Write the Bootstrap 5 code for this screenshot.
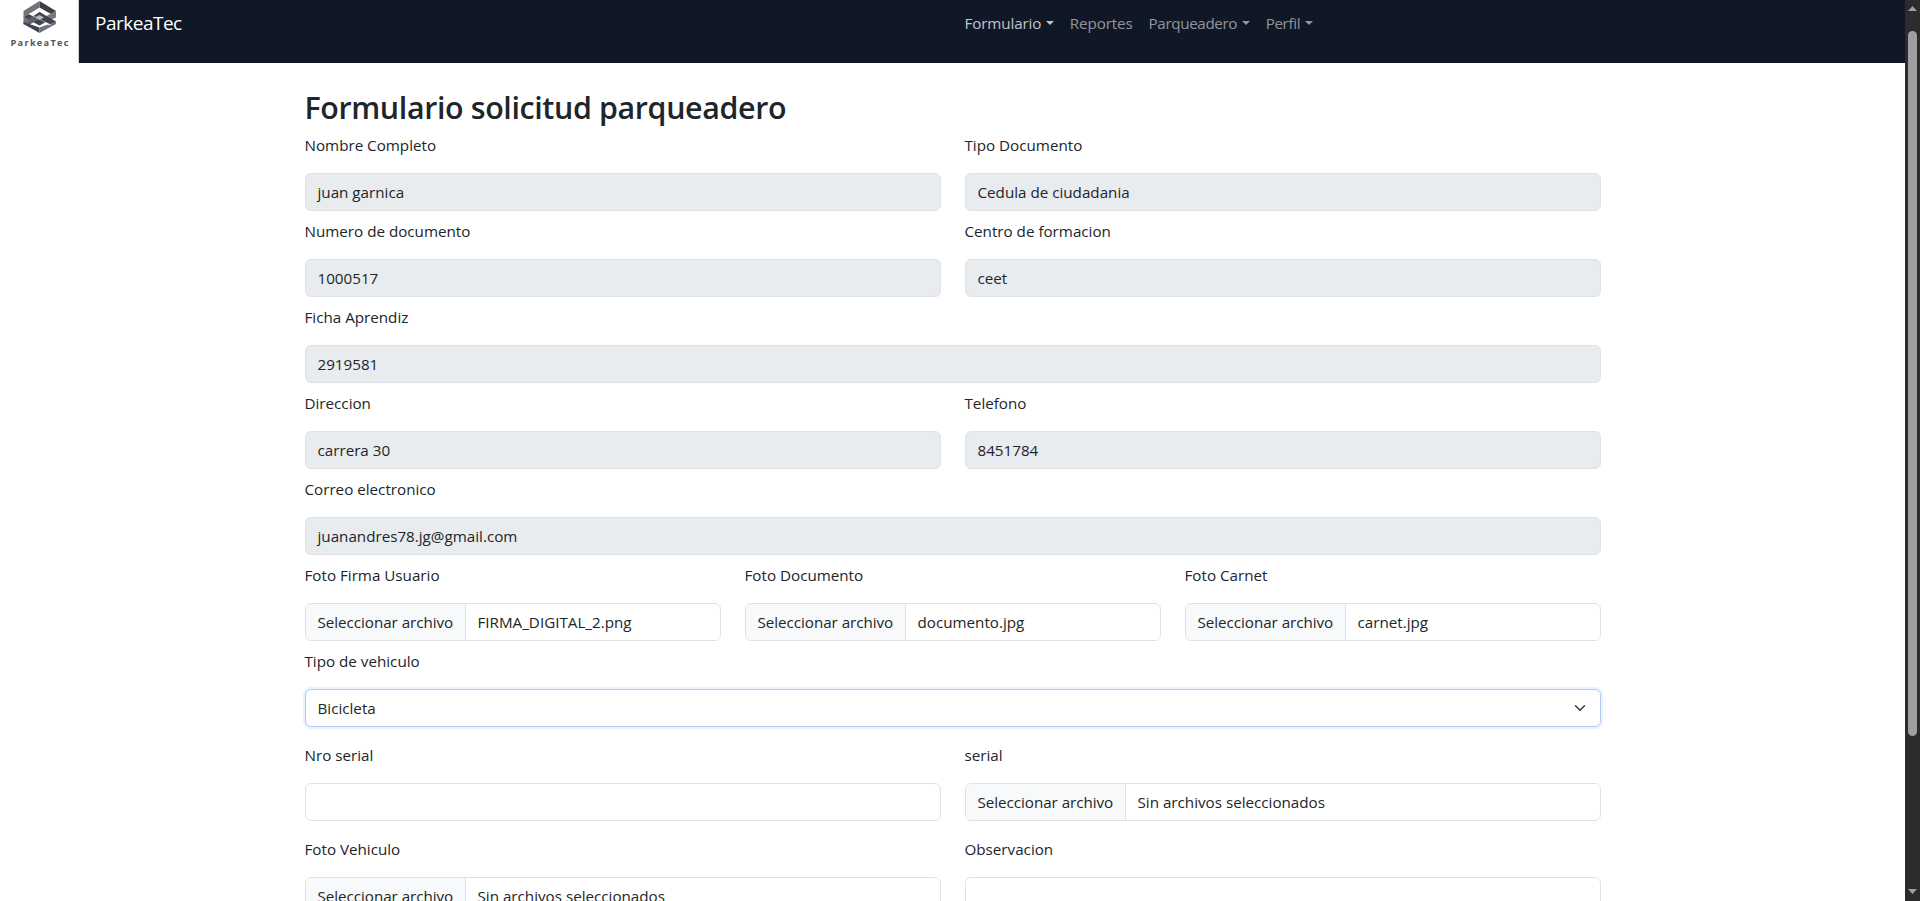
<!DOCTYPE html>
<html lang="es">
<head>
<meta charset="utf-8">
<meta name="viewport" content="width=device-width, initial-scale=1">
<title>ParkeaTec</title>
<link href="https://cdn.jsdelivr.net/npm/bootstrap@5.3.0/dist/css/bootstrap.min.css" rel="stylesheet">
<style>
  body { font-family: "Open Sans", "Noto Sans", sans-serif; font-size: 15.2px; line-height: 24px; height: 901px; overflow: hidden; }
  .page-area { width: 1905px; height: 901px; overflow: hidden; }
  .topbar { height: 63px; background: #101726; }
  .logo-box { width: 79px; height: 63px; background: #fff; }
  .brand-side { width: 877.5px; padding: 9px 0 0 16px; }
  .topbar .navbar-brand { font-size: 19px; line-height: 28px; letter-spacing: -.5px; color: #fff; padding: 0; }
  .topbar .nav-link { padding: 11px 8px; line-height: 24px; letter-spacing: -.12px; color: rgba(255,255,255,.55); }
  .topbar .nav-link.active { color: rgba(255,255,255,.75); }
  .topbar .nav-link.tight { letter-spacing: -.36px; }
  .topbar .nav-link.dropdown-toggle::after { border-top-width: 4.8px; border-left-width: 4.8px; border-right-width: 4.8px; margin-left: 4.5px; vertical-align: 3.9px; }
  h2 { font-size: 30.4px; line-height: 38.4px; font-weight: 600; letter-spacing: -.37px; }
  h2 span { display: block; padding-top: 2px; height: 38.4px; }
  .field-label { display: block; margin-bottom: 16px; height: 24px; }
  .form-control, .form-select { font-size: 15.2px; line-height: 24px; height: 38px; }
  .locked { background: #e9ecef; }
  .picker { display: flex; padding: 0; overflow: hidden; }
  .picker-btn { width: 160px; flex: none; padding: 6px 0 6px 12px; background: #f8f9fa; border-right: 1px solid #dee2e6; letter-spacing: -.04px; white-space: nowrap; }
  .picker-name { padding: 6px 12px; white-space: nowrap; }
  .chosen { border-color: #b1cdf3; box-shadow: 0 0 0 2px rgba(13,110,253,.09); }
  .scroll-track { width: 15px; height: 901px; background: #2c2c2c; }
  .scroll-thumb { width: 9px; height: 705px; border-radius: 5px; background: #9f9f9f; }
</style>
</head>
<body>
<div class="d-flex">
  <div class="page-area">
    <nav class="topbar d-flex">
      <div class="logo-box">
        <svg class="d-block" width="79" height="63" viewBox="0 0 79 63">
          <path d="M23.500 11 39.500 1v6.500L29 14l-5.500 3z" fill="#70737a"/>
          <path d="M39.500 1l16.500 10-5 3-11.500-6.500z" fill="#3c3f47"/>
          <path d="M29 14l10.500 5.500 5.500 3-5.500 3L23.500 17z" fill="#41444c"/>
          <path d="M56 11v6.500L45 22.500l-5.500-3z" fill="#777a80"/>
          <path d="M23.500 22 39.500 12l5.500 3.500L29 25z" fill="#5e6168"/>
          <path d="M39.500 12l16.500 9.500-5 3.500-11.500-6.500-4-3z" fill="#41444c"/>
          <path d="M23.500 16.500l5 3v2.500l-5 2.500z" fill="#70737a"/>
          <path d="M23.500 22l16 5.500V33L23.500 24z" fill="#41444c"/>
          <path d="M56 21.500V24L39.500 33v-5.500z" fill="#70737a"/>
          <path d="M35 17.500l4.500-2.500 4.500 2.500-4.500 2.500z" fill="#babcbf"/>
          <path d="M29 13.500l5.500 3M45 23l5.500 2" stroke="#fff" stroke-width="1"/>
          <text x="10.500" y="45.500" textLength="58" font-family="Open Sans" font-weight="700" font-size="9.200" fill="#53565d">ParkeaTec</text>
          <path d="M78.500 0v63" stroke="#d0d2d5"/>
        </svg>
      </div>
      <div class="brand-side"><a class="navbar-brand d-inline-block" href="#">ParkeaTec</a></div>
      <ul class="nav flex-nowrap">
        <li class="nav-item"><a class="nav-link dropdown-toggle active" href="#">Formulario</a></li>
        <li class="nav-item"><a class="nav-link" href="#">Reportes</a></li>
        <li class="nav-item"><a class="nav-link dropdown-toggle tight" href="#">Parqueadero</a></li>
        <li class="nav-item"><a class="nav-link dropdown-toggle tight" href="#">Perfil</a></li>
      </ul>
    </nav>
    <main class="container pt-4">
      <h2 class="mb-2"><span>Formulario solicitud parqueadero</span></h2>
      <div class="row mb-2">
        <div class="col-6"><label class="field-label">Nombre Completo</label><div class="form-control locked">juan garnica</div></div>
        <div class="col-6"><label class="field-label">Tipo Documento</label><div class="form-control locked">Cedula de ciudadania</div></div>
      </div>
      <div class="row mb-2">
        <div class="col-6"><label class="field-label">Numero de documento</label><div class="form-control locked">1000517</div></div>
        <div class="col-6"><label class="field-label">Centro de formacion</label><div class="form-control locked">ceet</div></div>
      </div>
      <div class="row mb-2">
        <div class="col-12"><label class="field-label">Ficha Aprendiz</label><div class="form-control locked">2919581</div></div>
      </div>
      <div class="row mb-2">
        <div class="col-6"><label class="field-label">Direccion</label><div class="form-control locked">carrera 30</div></div>
        <div class="col-6"><label class="field-label">Telefono</label><div class="form-control locked">8451784</div></div>
      </div>
      <div class="row mb-2">
        <div class="col-12"><label class="field-label">Correo electronico</label><div class="form-control locked">juanandres78.jg@gmail.com</div></div>
      </div>
      <div class="row mb-2">
        <div class="col-4"><label class="field-label">Foto Firma Usuario</label><div class="form-control picker"><span class="picker-btn">Seleccionar archivo</span><span class="picker-name">FIRMA_DIGITAL_2.png</span></div></div>
        <div class="col-4"><label class="field-label">Foto Documento</label><div class="form-control picker"><span class="picker-btn">Seleccionar archivo</span><span class="picker-name">documento.jpg</span></div></div>
        <div class="col-4"><label class="field-label">Foto Carnet</label><div class="form-control picker"><span class="picker-btn">Seleccionar archivo</span><span class="picker-name">carnet.jpg</span></div></div>
      </div>
      <div class="row mb-3">
        <div class="col-12"><label class="field-label">Tipo de vehiculo</label><div class="form-select chosen">Bicicleta</div></div>
      </div>
      <div class="row mb-3">
        <div class="col-6"><label class="field-label">Nro serial</label><div class="form-control"></div></div>
        <div class="col-6"><label class="field-label">serial</label><div class="form-control picker"><span class="picker-btn">Seleccionar archivo</span><span class="picker-name">Sin archivos seleccionados</span></div></div>
      </div>
      <div class="row">
        <div class="col-6"><label class="field-label">Foto Vehiculo</label><div class="form-control picker"><span class="picker-btn">Seleccionar archivo</span><span class="picker-name">Sin archivos seleccionados</span></div></div>
        <div class="col-6"><label class="field-label">Observacion</label><div class="form-control"></div></div>
      </div>
    </main>
  </div>
  <div class="scroll-track d-flex flex-column align-items-center">
    <svg width="15" height="31" viewBox="0 0 15 31"><path d="M3 11 7.500 6 12 11z" fill="#9f9f9f"/></svg>
    <div class="scroll-thumb"></div>
    <svg class="mt-auto" width="15" height="16" viewBox="0 0 15 16"><path d="M3 4h9L7.500 9z" fill="#9f9f9f"/></svg>
  </div>
</div>
<script src="https://cdn.jsdelivr.net/npm/bootstrap@5.3.0/dist/js/bootstrap.bundle.min.js"></script>
</body>
</html>
